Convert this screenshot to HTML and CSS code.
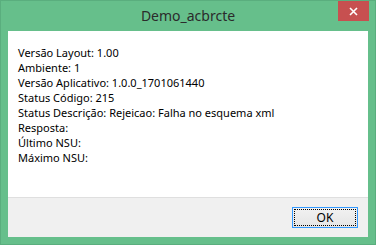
FILE: index.html
```html
<!DOCTYPE html>
<html lang="pt">
  <head>
    <meta charset="UTF-8" />
    <title>Demo_acbrcte</title>
    <link rel="stylesheet" href="styles.css">
  </head>
  <body>
    <div class="window">
      <div class="titlebar">
        <span></span>
        <span class="title">Demo_acbrcte</span>
        <span class="close">
          <svg width="9" height="9" viewBox="0 0 9 9">
            <path d="M1 1 L8 8 M8 1 L1 8" stroke="#fff" stroke-width="1.6" />
          </svg>
        </span>
      </div>
      <div class="client">
        <div class="message">
          <p>Versão Layout: 1.00</p>
          <p>Ambiente: 1</p>
          <p>Versão Aplicativo: 1.0.0_1701061440</p>
          <p>Status Código: 215</p>
          <p>Status Descrição: Rejeicao: Falha no esquema xml</p>
          <p>Resposta:</p>
          <p>Último NSU:</p>
          <p>Máximo NSU:</p>
        </div>
        <div class="buttons">
          <button class="btn">OK</button>
        </div>
      </div>
    </div>
  </body>
</html>
```

FILE: styles.css
```css
body {
    margin: 0;
    font-family: "Noto Sans", "Open Sans", sans-serif;
}
.window {
    width: 376px;
    height: 245px;
    box-sizing: border-box;
    background-color: #66bf8b;
    border: 1px solid #5aae7e;
    display: flex;
    flex-direction: column;
}
.titlebar {
    height: 30px;
    display: grid;
    grid-template-columns: 1fr auto 1fr;
    align-items: start;
}
.title {
    font-size: 14px;
    color: #2b2b2b;
    line-height: 29px;
}
.close {
    justify-self: end;
    width: 31px;
    height: 20px;
    margin-right: 6px;
    background-color: #c75050;
    display: flex;
    justify-content: center;
    align-items: center;
}
.client {
    flex: 1;
    margin: 0 7px 7px;
    display: flex;
    flex-direction: column;
}
.message {
    flex: 1;
    background-color: #fff;
    padding: 14px 10px 0;
    font-size: 11px;
    line-height: 15px;
    color: #000;
}
.message p {
    margin: 0;
}
.buttons {
    height: 40px;
    background-color: #f0f0f0;
    border-top: 1px solid #dfdfdf;
    display: flex;
    justify-content: flex-end;
    align-items: flex-start;
    padding: 9px 10px 0 0;
    box-sizing: border-box;
}
.btn {
    width: 66px;
    height: 21px;
    box-sizing: border-box;
    border: 1px solid #3399ff;
    background: linear-gradient(#f2f2f2, #e5e5e5);
    outline: 1px dotted #000;
    outline-offset: -3px;
    font-family: "Noto Sans", "Open Sans", sans-serif;
    font-size: 12px;
    color: #000;
    padding: 0;
}
```
